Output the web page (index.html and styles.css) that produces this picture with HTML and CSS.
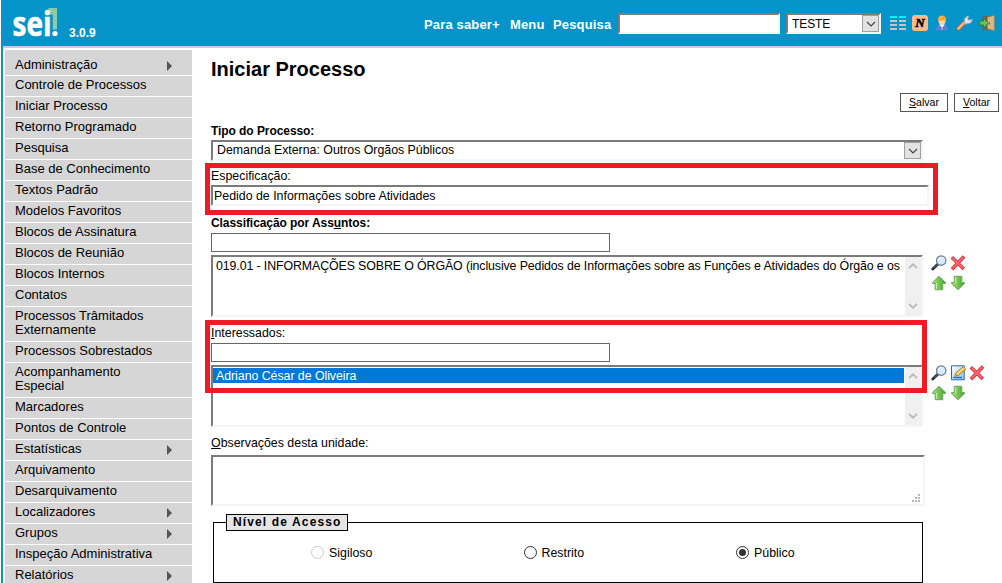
FILE: index.html
```html
<!DOCTYPE html>
<html lang="pt-BR">
<head>
<meta charset="utf-8">
<title>SEI - Iniciar Processo</title>
<link rel="stylesheet" href="styles.css">
</head>
<body>
<svg class="defs" aria-hidden="true">
  <defs>
    <linearGradient id="green" x1="0" x2="1"><stop offset="0" stop-color="#a5df78"/><stop offset="1" stop-color="#45a52f"/></linearGradient>
    <linearGradient id="photo" x2="1" y2="1"><stop offset="0" stop-color="#fff"/><stop offset="1" stop-color="#8fc0f5"/></linearGradient>
    <symbol id="lens" viewBox="0 0 16 16">
      <path d="M7 9 1.8 14" stroke="#222c3c" stroke-width="2.8" stroke-linecap="round"/>
      <path d="m6.5 9.2-4 4" stroke="#657386" stroke-width="1"/>
      <circle cx="10.2" cy="5.6" r="4.7" fill="#d5eafc" stroke="#6b7a90" stroke-width="1.2"/>
      <path d="M7.5 5a3 3 0 0 1 3-2.3" fill="none" stroke="#fff" stroke-width="1.3"/>
    </symbol>
    <symbol id="remove" viewBox="0 0 16 16">
      <path d="M1.8 2.3 13.8 14M14 1.5 2 14.3" stroke="#dc3540" stroke-width="3.6"/>
      <path d="m2.5 3 10.7 10.4M13.4 2.2 2.7 13.5" stroke="#f9686c" stroke-width="1.8"/>
    </symbol>
    <symbol id="up" viewBox="0 0 16 16"><path d="m8 1.3 6.4 6.2v1h-2.6v6.2H4.2V8.5H1.6v-1z" fill="url(#green)" stroke="#6aa85c"/><path d="M5.7 8v5.8" stroke="#d0f2b7"/></symbol>
    <symbol id="down" viewBox="0 0 16 16"><path d="M4.2 1.3h7.6v6.2h2.6v1L8 14.7 1.6 8.5v-1h2.6z" fill="url(#green)" stroke="#6aa85c"/><path d="M5.7 2.3v6" stroke="#d0f2b7"/></symbol>
    <symbol id="edit" viewBox="0 0 16 16">
      <path d="M1.5.8h12.7v14H1.5z" fill="url(#photo)" stroke="#2b68b0"/><path d="M3 12.5h9" stroke="#2d6eae" stroke-width="1.4"/>
      <path d="m5 11 .8-3.2 7.6-6 2.4 2.4-7.3 6.2z" fill="#f7c54e" stroke="#9b7129" stroke-width=".8"/><path d="m6.8 8.7 7-5.8" stroke="#fff0a4"/>
    </symbol>
    <symbol id="chev" viewBox="0 0 10 6"><path d="m1 1 4 4 4-4" fill="none" stroke="currentColor" stroke-width="1.2"/></symbol>
    <symbol id="chev-bold" viewBox="0 0 10 6"><path d="m1 1 4 3.7L9 1" fill="none" stroke="currentColor" stroke-width="1.9"/></symbol>
  </defs>
</svg>
<div class="page">
  <header class="header">
    <svg class="logo" width="50" height="38" viewBox="0 0 50 38">
      <path d="M36.5 3H45v21.5h-4.2V9.5h-4.3z" fill="#8fcaa8"/>
      <text x="0.5" y="31" textLength="39" lengthAdjust="spacingAndGlyphs" class="logo-text">sei</text>
      <circle cx="43" cy="28.5" r="2.6" fill="#fff"/>
    </svg>
    <span class="version">3.0.9</span>
    <nav class="links"><a class="l1">Para saber+</a><a class="l2">Menu</a><a class="l3">Pesquisa</a></nav>
    <div class="sunken search"></div>
    <div class="sunken combo unit"><span>TESTE</span><i class="drop"><svg width="10" height="6"><use href="#chev"/></svg></i></div>
    <div class="tools">
      <svg width="16" height="16" viewBox="0 0 16 16"><path d="M0 2h7M9 2h7" stroke="#00f4ff" stroke-width="2"/><path d="M0 6h7M9 6h7M0 10h7M9 10h7M0 14h7M9 14h7" stroke="#c5c5c5" stroke-width="2"/></svg>
      <svg width="16" height="16" viewBox="0 0 16 16"><rect width="16" height="16" rx="3" fill="#ffb98b"/><text x="8" y="12.4" text-anchor="middle" class="n-icon">N</text></svg>
      <svg width="16" height="16" viewBox="0 0 16 16"><path d="M2 15.2c0-4 2-6 6-6s6 2 6 6z" fill="#5a80d6"/><path d="m5.2 9.3 2.8 4 2.8-4z" fill="#fff"/><path d="m8 10.5 1 4.7H7z" fill="#8ca9df"/><circle cx="8" cy="6" r="3.5" fill="#ffd6a0"/><path d="M3.8 5.4C3.7 2.4 5.4.5 8 .5s4.3 1.9 4.2 4.9z" fill="#f5a72b"/><path d="M5.7 3c.5-1 1-1.4 2-1.4" stroke="#ffdb7b" fill="none"/></svg>
      <svg width="17" height="16" viewBox="0 0 17 16"><path d="m2.5 13.5 7-7" stroke="#c9562c" stroke-width="4" stroke-linecap="round"/><path d="m2.5 13.5 6.3-6.3" stroke="#ffb483" stroke-width="2.6" stroke-linecap="round"/><path d="M8.5 7.5 8.2 4l3-3h2L11.7 3.5l1.2 1.6L16.5 4c0 3-2.5 5-5.5 4.7L9.7 9.5z" fill="#dbe5e9" stroke="#7f97a0" stroke-width=".8"/></svg>
      <svg width="16" height="16" viewBox="0 0 16 16"><path d="M3.5 1H15v14H3.5z" fill="#6c6657"/><path d="M8.5 2.2 15.3.4v15.2l-6.8-1.8z" fill="#dcb983" stroke="#a5875a" stroke-width=".7"/><path d="M10.5 7.5v2" stroke="#7d572a"/><path d="M.5 6h4V3l5 5.2-5 4.8v-3h-4z" fill="#6bc257" stroke="#267635" stroke-width=".8"/></svg>
    </div>
  </header>
  <div class="columns">
    <ul class="menu">
      <li class="first sub">Administração</li><li>Controle de Processos</li><li>Iniciar Processo</li><li>Retorno Programado</li><li>Pesquisa</li><li>Base de Conhecimento</li><li>Textos Padrão</li><li>Modelos Favoritos</li><li>Blocos de Assinatura</li><li>Blocos de Reunião</li><li>Blocos Internos</li><li>Contatos</li><li>Processos Trâmitados<br>Externamente</li><li>Processos Sobrestados</li><li>Acompanhamento<br>Especial</li><li>Marcadores</li><li>Pontos de Controle</li><li class="sub">Estatísticas</li><li>Arquivamento</li><li>Desarquivamento</li><li class="sub">Localizadores</li><li class="sub">Grupos</li><li>Inspeção Administrativa</li><li class="sub">Relatórios</li>
    </ul>
    <main class="main">
      <h1>Iniciar Processo</h1>
      <div class="buttons"><div class="btn save"><u>S</u>alvar</div><div class="btn back"><u>V</u>oltar</div></div>
      <div class="label tipo strong">Tipo do Processo:</div>
      <div class="sunken combo type"><span>Demanda Externa: Outros Orgãos Públicos</span><i class="drop"><svg width="10" height="6"><use href="#chev"/></svg></i></div>
      <section class="group">
        <div class="label spec">Especificação:</div>
        <div class="sunken field">Pedido de Informações sobre Atividades</div>
        <div class="mark mark-spec"></div>
      </section>
      <div class="label subject strong">Classificação por Ass<u>u</u>ntos:</div>
      <div class="plain"></div>
      <div class="listrow">
        <div class="sunken list"><div class="options"><div class="option long">019.01 - INFORMAÇÕES SOBRE O ÓRGÃO (inclusive Pedidos de Informações sobre as Funções e Atividades do Órgão e os <span class="cut">:</span></div></div><div class="scroll"><svg class="flip" width="10" height="6"><use href="#chev-bold"/></svg><svg width="10" height="6"><use href="#chev-bold"/></svg></div></div>
        <div class="actions"><div><svg width="16" height="16"><use href="#lens"/></svg><svg width="16" height="16"><use href="#remove"/></svg></div><div><svg width="16" height="16"><use href="#up"/></svg><svg width="16" height="16"><use href="#down"/></svg></div></div>
      </div>
      <section class="group">
        <div class="label people"><u>I</u>nteressados:</div>
        <div class="plain"></div>
        <div class="listrow">
          <div class="sunken list"><div class="options"><div class="option selected">Adriano César de Oliveira</div></div><div class="scroll"><svg class="flip" width="10" height="6"><use href="#chev-bold"/></svg><svg width="10" height="6"><use href="#chev-bold"/></svg></div></div>
          <div class="actions"><div><svg width="16" height="16"><use href="#lens"/></svg><svg width="16" height="16"><use href="#edit"/></svg><svg width="16" height="16"><use href="#remove"/></svg></div><div><svg width="16" height="16"><use href="#up"/></svg><svg width="16" height="16"><use href="#down"/></svg></div></div>
        </div>
        <div class="mark mark-people"></div>
      </section>
      <div class="label notes"><u>O</u>bservações desta unidade:</div>
      <div class="sunken textarea"><svg width="8" height="8" viewBox="0 0 8 8" fill="#b8b8b8"><path d="M6 0h2v2H6zM3 3h2v2H3zM6 3h2v2H6zM0 6h2v2H0zM3 6h2v2H3zM6 6h2v2H6z"/></svg></div>
      <div class="access">
        <div class="legend">Nível de Acesso</div>
        <div class="radios">
          <div class="choice off"><i></i><span>Sigiloso</span></div>
          <div class="choice"><i></i><span>Restrito</span></div>
          <div class="choice on"><i></i><span>Público</span></div>
        </div>
      </div>
    </main>
  </div>
</div>
</body>
</html>
```
FILE: styles.css
```css
* { box-sizing: border-box; }
html, body { margin: 0; overflow: hidden; }
body { width: 1002px; height: 583px; background: #fff; color: #000; font: 12.38px/14px "Liberation Sans", Arial, sans-serif; }
svg { display: block; flex: none; }
u { text-decoration: underline; text-underline-offset: 1px; text-decoration-thickness: 1px; }
.defs { position: absolute; width: 0; height: 0; }
.page { height: 583px; margin-left: 1px; overflow: hidden; }

.header { display: flex; height: 46px; padding: 0 0 0 11px; background: #0494c9; }
.header > * { flex-shrink: 0; }
.logo { margin-top: 5px; overflow: visible; }
.logo-text { font: bold 34px "Open Sans", sans-serif; fill: #fff; stroke: #fff; stroke-width: .6; }
.version { width: 362px; padding: 26px 0 0 7px; color: #fff; font-weight: bold; font-size: 12px; }
.links { display: flex; width: 194px; padding: 18px 0 0 0; color: #fff; font-weight: bold; font-size: 13px; letter-spacing: .15px; white-space: nowrap; }
.l1 { width: 86px; }
.l2 { width: 43px; }
.sunken { border: 2px solid; border-color: #7b7b7b #f5f5f5 #f5f5f5 #7b7b7b; background: #fff; }
.search { width: 162px; height: 21px; margin: 13px 6px 0 0; }
.combo { display: flex; justify-content: space-between; height: 21px; white-space: nowrap; }
.combo span { padding: 1px 0 0 4px; }
.type span { letter-spacing: -.02px; }
.drop { display: flex; align-items: center; justify-content: center; width: 17px; height: 17px; border: 1px solid #a0a0a0; background: #e2e2e2; color: #444; }
.unit { width: 95px; margin: 13px 9px 0 0; }
.unit span { padding-top: 2px; font-size: 12px; letter-spacing: -.1px; }
.tools { display: flex; gap: 6px; padding-top: 15px; }
.n-icon { font: italic bold 13px "Liberation Serif", serif; fill: #000; stroke: #000; stroke-width: .5; }

.columns { display: flex; height: 537px; border-left: 2px solid #0494c9; }
.menu { width: 189px; margin: 0; padding: 2px 0 0 2px; border-top: 2px solid #ccc; list-style: none; font-size: 13px; line-height: 14px; }
.menu li { margin-bottom: 1px; padding: 2px 0 4px 10px; background: #d6d6d6; }
.menu .first { padding-top: 8px; padding-bottom: 3px; }
.menu .sub { display: flex; justify-content: space-between; align-items: center; padding-right: 20px; }
.menu .sub::after { content: ""; margin-top: 1px; border: solid transparent; border-width: 5px 0 5px 5px; border-left-color: #555; }

.main { flex: 1; padding-left: 19px; border-top: 2px solid #ccc; }
h1 { height: 45px; margin: 0; padding-top: 10px; font-size: 20px; line-height: 22px; }
.buttons { display: flex; justify-content: flex-end; gap: 6px; padding-right: 3px; }
.btn { height: 19px; border: 1px solid #555; font-size: 10.6px; line-height: 17px; text-align: center; }
.save { width: 48px; }
.back { width: 45px; }
.label { white-space: nowrap; }
.strong { font-weight: bold; font-size: 12px; letter-spacing: -.07px; }
.tipo { height: 28px; padding-top: 12px; }
.type { width: 712px; }
.group { position: relative; }
.spec { height: 24px; padding-top: 8px; }
.field { width: 718px; height: 21px; padding: 2px 0 0 1px; }
.subject { height: 27px; padding-top: 10px; }
.plain { width: 399px; height: 19px; border: 1px solid #666; }
.listrow { display: flex; height: 65px; padding-top: 3px; }
.list { display: flex; width: 712px; height: 62px; }
.options { width: 691px; overflow: hidden; }
.option { height: 15px; margin-top: 1px; padding-left: 3px; line-height: 17px; letter-spacing: -.05px; white-space: nowrap; }
.option.long { letter-spacing: -.11px; }
.option.selected { background: #0078d7; color: #fff; }
.cut { color: #d59b38; }
.scroll { display: flex; flex-direction: column; justify-content: space-between; align-items: center; width: 16px; margin-left: 1px; padding: 6px 0; background: #f0f0f0; color: #bcbcbc; }
.flip { transform: scaleY(-1); }
.actions { display: flex; flex-direction: column; gap: 4px; padding-left: 8px; }
.actions div { display: flex; gap: 3px; }
.mark { position: absolute; border: 5px solid #ed1c24; }
.mark-spec { left: -6px; top: 2px; width: 733px; height: 52px; }
.mark-people { left: -6px; top: 3px; width: 722px; height: 73px; }
.people { height: 26px; padding-top: 9px; }
.notes { height: 28px; padding-top: 9px; }
.textarea { display: flex; align-items: flex-end; justify-content: flex-end; width: 714px; height: 51px; padding: 2px 3px; }
.access { width: 710px; height: 61px; margin: 16px 0 0 2px; border: 1px solid #000; }
.legend { width: 122px; height: 17px; margin: -9px 0 0 12px; border: 1px solid #000; background: #e5e5e5; font-size: 12px; font-weight: bold; line-height: 15px; letter-spacing: 1.13px; padding-left: 6px; white-space: nowrap; }
.radios { display: flex; padding: 14px 0 0 97px; }
.choice { display: flex; flex: none; align-items: center; width: 212.5px; gap: 5px; }
.choice span { padding-top: 1px; }
.choice:last-child { width: 90px; }
.choice i { display: flex; align-items: center; justify-content: center; width: 13px; height: 13px; border: 1px solid #333; border-radius: 50%; }
.off i { border-color: #ccc; }
.on i::after { content: ""; width: 7px; height: 7px; border-radius: 50%; background: #333; }
```
